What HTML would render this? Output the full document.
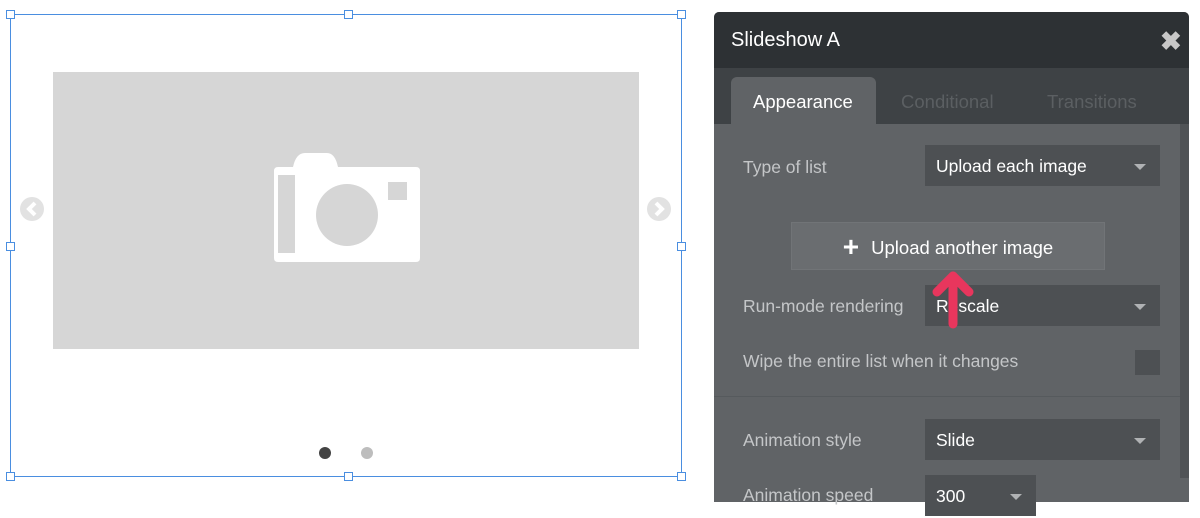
<!DOCTYPE html>
<html><head><style>
body{margin:0;width:1200px;height:498px;background:#fff;position:relative;overflow:hidden;font-family:"Liberation Sans",sans-serif}
.a{position:absolute}
.h{position:absolute;width:7px;height:7px;background:#fff;border:1px solid #4a8ee0}
.lbl{position:absolute;left:743px;color:#c4c6c8;font-size:17.5px}
.sel{position:absolute;background:#4d5053;color:#fff;font-size:17.5px;box-sizing:border-box;padding-left:11px}
.car{position:absolute;right:14px;top:19px;width:0;height:0;border-left:6px solid transparent;border-right:6px solid transparent;border-top:6px solid #b0b2b4}
</style></head><body>
<div class="a" style="left:10px;top:14px;width:670px;height:461px;border:1px solid #4a8ee0"></div>
<div class="h" style="left:6px;top:10px"></div><div class="h" style="left:344px;top:10px"></div><div class="h" style="left:677px;top:10px"></div>
<div class="h" style="left:6px;top:242px"></div><div class="h" style="left:677px;top:242px"></div>
<div class="h" style="left:6px;top:472px"></div><div class="h" style="left:344px;top:472px"></div><div class="h" style="left:677px;top:472px"></div>
<div class="a" style="left:53px;top:72px;width:586px;height:277px;background:#d6d6d6"></div>
<svg class="a" style="left:0;top:0" width="700" height="498">
<path d="M274 171 Q274 167 278 167 L293 167 Q296 153 305 153 L327 153 Q335 153 338 167 L416 167 Q420 167 420 171 L420 258 Q420 262 416 262 L278 262 Q274 262 274 258 Z" fill="#fff"/>
<rect x="278" y="175" width="17" height="78" fill="#d6d6d6"/>
<circle cx="347" cy="215" r="31" fill="#d6d6d6"/>
<rect x="388" y="182" width="19" height="18" fill="#d6d6d6"/>
<circle cx="32" cy="209" r="12" fill="#e2e2e2"/><path d="M35 203 L29 209 L35 215" stroke="#fff" stroke-width="4" fill="none"/>
<circle cx="659" cy="209" r="12" fill="#e2e2e2"/><path d="M656 203 L662 209 L656 215" stroke="#fff" stroke-width="4" fill="none"/>
<circle cx="325" cy="453" r="6" fill="#444"/><circle cx="367" cy="453" r="6" fill="#bdbdbd"/>
</svg>
<div class="a" style="left:714px;top:12px;width:475px;height:490px;background:#606366;border-radius:5px 5px 0 0;overflow:hidden">
<div class="a" style="left:0;top:0;width:475px;height:56px;background:#2d3134"></div>
<div class="a" style="left:17px;top:17px;color:#fff;font-size:20px">Slideshow A</div>
<div class="a" style="left:446px;top:14px;color:#c8c8c8;font-size:26px;font-weight:bold">✖</div>
<div class="a" style="left:0;top:56px;width:475px;height:56px;background:#3e4245"></div>
<div class="a" style="left:17px;top:65px;width:145px;height:50px;background:#606366;border-radius:6px 6px 0 0"></div>
<div class="a" style="left:39px;top:79px;color:#fff;font-size:18.5px">Appearance</div>
<div class="a" style="left:187px;top:79px;color:#5b5f62;font-size:18.5px">Conditional</div>
<div class="a" style="left:333px;top:79px;color:#5b5f62;font-size:18.5px">Transitions</div>
<div class="a" style="left:466px;top:112px;width:9px;height:354px;background:#505356"></div>
<div class="a" style="left:0;top:384px;width:466px;height:1px;background:#565a5d"></div>
</div>
<div class="lbl" style="top:157px">Type of list</div>
<div class="sel" style="left:925px;top:145px;width:235px;height:41px;line-height:43px">Upload each image<div class="car"></div></div>
<div class="a" style="left:791px;top:222px;width:314px;height:48px;background:#6a6d70;border:1px solid #717477;box-sizing:border-box;color:#fff;font-size:18.5px;line-height:48px;text-align:center"><span style="font-size:28px;font-weight:bold;vertical-align:-2px;margin-right:12px">+</span>Upload another image</div>
<div class="lbl" style="top:296px">Run-mode rendering</div>
<div class="sel" style="left:925px;top:285px;width:235px;height:41px;line-height:43px">Rescale<div class="car"></div></div>
<svg class="a" style="left:925px;top:268px" width="60" height="62"><path d="M28 8 L28 56" stroke="#e8365d" stroke-width="9" stroke-linecap="round"/><path d="M12 24 L28 8 L44 24" stroke="#e8365d" stroke-width="9" fill="none" stroke-linecap="round" stroke-linejoin="round"/></svg>
<div class="lbl" style="top:351px">Wipe the entire list when it changes</div>
<div class="a" style="left:1135px;top:350px;width:25px;height:25px;background:#4d5053"></div>
<div class="lbl" style="top:430px">Animation style</div>
<div class="sel" style="left:925px;top:419px;width:235px;height:41px;line-height:43px">Slide<div class="car"></div></div>
<div class="lbl" style="top:485px">Animation speed</div>
<div class="sel" style="left:925px;top:475px;width:111px;height:41px;line-height:43px">300<div class="car"></div></div>
</body></html>
